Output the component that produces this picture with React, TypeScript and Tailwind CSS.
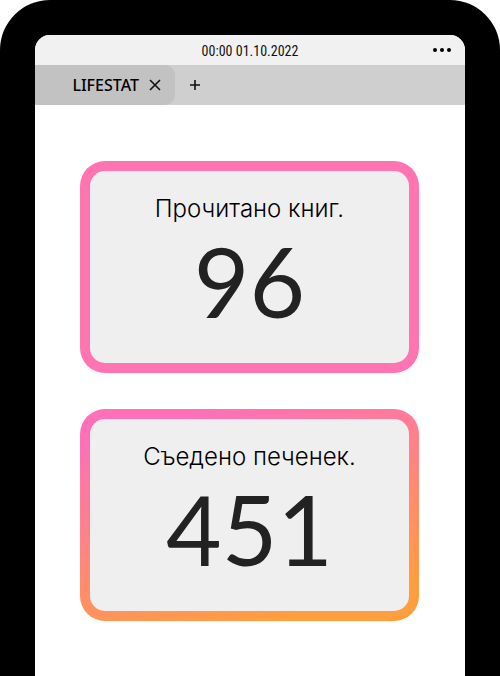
import React from "react";

type Stat = { title: string; value: number; frame: string };

const stats: Stat[] = [
  { title: "Прочитано книг.", value: 96, frame: "bg-[#ff74b1]" },
  {
    title: "Съедено печенек.",
    value: 451,
    frame: "bg-[linear-gradient(165deg,#ff70b8_12%,#ff9e3e_88%)]",
  },
];

function StatusBar() {
  return (
    <header className="grid h-[30px] grid-cols-[1fr_auto_1fr] items-center bg-[#f1f1f1] px-3.5">
      <time
        dateTime="2022-10-01T00:00"
        className="col-start-2 pt-0.5 font-['Roboto_Condensed','Roboto',sans-serif] text-[14px] leading-5 text-[#111111]"
      >
        00:00 01.10.2022
      </time>
      <button type="button" aria-label="Меню" className="flex justify-self-end gap-[3px]">
        <span className="size-1 rounded-full bg-black" />
        <span className="size-1 rounded-full bg-black" />
        <span className="size-1 rounded-full bg-black" />
      </button>
    </header>
  );
}

function TabBar() {
  return (
    <nav className="flex h-10 items-center bg-[#cfcfcf]">
      <div className="flex h-full w-[140px] items-center justify-end gap-2.5 rounded-r-[10px] bg-[#c2c2c2] pr-3.5">
        <span className="font-['Noto_Sans',sans-serif] text-[16px] font-medium leading-5 text-black">
          LIFESTAT
        </span>
        <button type="button" aria-label="Закрыть вкладку">
          <svg viewBox="0 0 12 12" className="size-3" fill="none" stroke="#111" strokeWidth="1.6">
            <path d="M1 1 11 11M11 1 1 11" />
          </svg>
        </button>
      </div>
      <button type="button" aria-label="Новая вкладка" className="ml-3.5">
        <svg viewBox="0 0 12 12" className="size-3" fill="none" stroke="#111" strokeWidth="1.6">
          <path d="M6 1V11M1 6H11" />
        </svg>
      </button>
    </nav>
  );
}

function StatCard({ title, value, frame }: Stat) {
  return (
    <section className={`rounded-[25px] p-2.5 ${frame}`}>
      <div className="flex h-48 flex-col items-center rounded-[15px] bg-[#efefef] pt-6 text-center">
        <h2 className="font-['Inter',sans-serif] text-[24px] font-light leading-7 text-black">
          {title}
        </h2>
        <p className="mt-2.5 font-['Lato',sans-serif] text-[96px] leading-[96px] text-[#222222]">
          {value}
        </p>
      </div>
    </section>
  );
}

export default function App() {
  return (
    <div className="bg-white">
      <div className="flex min-h-screen flex-col rounded-t-[50px] bg-black px-[35px] pt-[35px]">
        <div className="flex grow flex-col overflow-hidden rounded-t-[15px] bg-white">
          <StatusBar />
          <TabBar />
          <main className="flex flex-col gap-9 pb-10 pl-[45px] pr-[46px] pt-14">
            {stats.map((stat) => (
              <StatCard key={stat.title} {...stat} />
            ))}
          </main>
        </div>
      </div>
    </div>
  );
}
